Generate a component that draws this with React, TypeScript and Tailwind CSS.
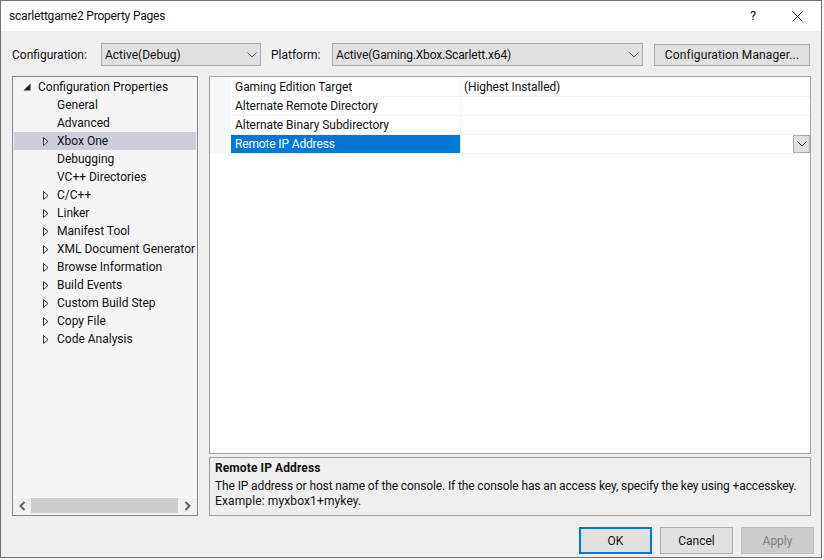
import React from 'react';

const treeItems = [
  { label: 'General', arrow: false },
  { label: 'Advanced', arrow: false },
  { label: 'Xbox One', arrow: true, selected: true },
  { label: 'Debugging', arrow: false },
  { label: 'VC++ Directories', arrow: false },
  { label: 'C/C++', arrow: true },
  { label: 'Linker', arrow: true },
  { label: 'Manifest Tool', arrow: true },
  { label: 'XML Document Generator', arrow: true },
  { label: 'Browse Information', arrow: true },
  { label: 'Build Events', arrow: true },
  { label: 'Custom Build Step', arrow: true },
  { label: 'Copy File', arrow: true },
  { label: 'Code Analysis', arrow: true },
];

const gridRows = [
  { name: 'Gaming Edition Target', value: '(Highest Installed)' },
  { name: 'Alternate Remote Directory', value: '' },
  { name: 'Alternate Binary Subdirectory', value: '' },
];

const Chevron = ({ color = '#5f5f5f' }: { color?: string }) => (
  <svg width="10" height="6" viewBox="0 0 10 6" fill="none">
    <path d="M0.5 0.5L5 5L9.5 0.5" stroke={color} strokeWidth="1" />
  </svg>
);

const ComboBox = ({ text, className }: { text: string; className: string }) => (
  <div className={`flex h-[23px] items-center justify-between border border-[#adadad] bg-[#e1e1e1] px-[3px] ${className}`}>
    <span>{text}</span>
    <span className="flex w-[10px] justify-center">
      <Chevron />
    </span>
  </div>
);

const DialogButton = ({ label, className }: { label: string; className: string }) => (
  <div className={`flex h-[27px] w-[73px] items-center justify-center ${className}`}>{label}</div>
);

export default function App() {
  return (
    <div className="h-[560px] w-[824px] bg-[#f7f7f7] text-[12px] leading-[18px] text-[#101010] [font-family:Roboto,sans-serif]">
      <div className="flex h-[558px] w-[822px] flex-col border border-[#707070] bg-[#efefef]">
        {/* Title bar */}
        <div className="flex h-[30px] shrink-0 items-center justify-between bg-white pl-[8px]">
          <span className="tracking-[-0.2px]">scarlettgame2 Property Pages</span>
          <div className="flex items-center">
            <span className="w-[46px] pl-[2px] text-center text-[13px]">?</span>
            <span className="flex w-[46px] justify-center pr-[2px]">
              <svg width="11" height="11" viewBox="0 0 11 11" fill="none">
                <path d="M0.5 0.5L10.5 10.5M10.5 0.5L0.5 10.5" stroke="#1a1a1a" strokeWidth="1" />
              </svg>
            </span>
          </div>
        </div>

        {/* Configuration row */}
        <div className="mt-[12px] flex h-[23px] shrink-0 items-center pl-[11px]">
          <span className="w-[89px]">Configuration:</span>
          <ComboBox text="Active(Debug)" className="w-[160px]" />
          <span className="ml-[10px] w-[61px]">Platform:</span>
          <ComboBox text="Active(Gaming.Xbox.Scarlett.x64)" className="w-[311px] tracking-[-0.15px]" />
          <div className="ml-[11px] flex h-[22px] w-[156px] items-center justify-center border border-[#adadad] bg-[#e1e1e1] tracking-[0.12px]">
            Configuration Manager...
          </div>
        </div>

        {/* Main area */}
        <div className="mt-[10px] flex h-[440px] shrink-0 gap-[11px] pl-[11px]">
          {/* Tree */}
          <div className="flex h-full w-[186px] shrink-0 flex-col border border-[#82828c] bg-[#f5f5f5]">
            <div className="flex-1 overflow-hidden pl-[1px] pr-[1px] pt-[1px]">
              <div className="flex h-[18px] items-center whitespace-nowrap">
                <span className="flex w-[24px] justify-end pr-[7px]">
                  <svg width="8" height="8" viewBox="0 0 8 8">
                    <path d="M7.5 0.5V7.5H0.5Z" fill="#222" />
                  </svg>
                </span>
                <span>Configuration Properties</span>
              </div>
              {treeItems.map((item) => (
                <div
                  key={item.label}
                  className={`flex h-[18px] items-center whitespace-nowrap ${item.selected ? 'bg-[#cccedb]' : ''}`}
                >
                  <span className="flex w-[43px] shrink-0 justify-end pr-[8px]">
                    {item.arrow && (
                      <svg width="6" height="9" viewBox="0 0 6 9">
                        <path d="M0.5 0.5L5 4.5L0.5 8.5Z" fill="#f5f5f5" stroke="#333" strokeWidth="1" />
                      </svg>
                    )}
                  </span>
                  <span>{item.label}</span>
                </div>
              ))}
            </div>
            <div className="mx-[1px] mb-[2px] flex h-[16px] shrink-0 items-center border-t border-white bg-[#f0f0f0]">
              <span className="flex w-[17px] justify-center">
                <svg width="7" height="10" viewBox="0 0 7 10" fill="none">
                  <path d="M5.5 1L1.5 5L5.5 9" stroke="#606060" strokeWidth="2" />
                </svg>
              </span>
              <div className="h-full w-[147px] bg-[#cdcdcd]" />
              <span className="flex w-[18px] justify-center">
                <svg width="7" height="10" viewBox="0 0 7 10" fill="none">
                  <path d="M1.5 1L5.5 5L1.5 9" stroke="#606060" strokeWidth="2" />
                </svg>
              </span>
            </div>
          </div>

          {/* Property grid and description */}
          <div className="flex w-[602px] shrink-0 flex-col gap-[3px]">
            <div className="h-[378px] shrink-0 border border-[#a0a0a0] bg-white pt-[1px]">
              {gridRows.map((row) => (
                <div key={row.name} className="flex h-[19px]">
                  <div className="w-[21px] shrink-0 bg-[#f5f9fc]" />
                  <div className="w-[229px] shrink-0 border-b border-[#f2f2f2] pl-[4px] leading-[18px] tracking-[-0.04px]">{row.name}</div>
                  <div className="flex-1 border-b border-l border-[#f2f2f2] pl-[3px] leading-[18px] tracking-[-0.1px]">{row.value}</div>
                </div>
              ))}
              <div className="flex h-[19px]">
                <div className="w-[21px] shrink-0 bg-[#f5f9fc]" />
                <div className="h-[18px] w-[229px] shrink-0 bg-[#0078d7] pl-[4px] tracking-[-0.15px] text-white">Remote IP Address</div>
                <div className="flex flex-1 justify-end border-b border-l border-[#f2f2f2]">
                  <span className="flex h-[18px] w-[17px] items-center justify-center border border-[#adadad] bg-[#e1e1e1]">
                    <Chevron color="#404040" />
                  </span>
                </div>
              </div>
            </div>
            <div className="h-[59px] shrink-0 border border-[#a0a0a0] px-[5px] leading-[15px]">
              <div className="mt-[3px] font-bold tracking-[0.1px]">Remote IP Address</div>
              <div className="mt-[3px] whitespace-nowrap tracking-[-0.12px]">
                The IP address or host name of the console. If the console has an access key, specify the key using +accesskey.
              </div>
              <div className="tracking-[0.12px]">Example: myxbox1+mykey.</div>
            </div>
          </div>
        </div>

        {/* Footer buttons */}
        <div className="mt-[11px] flex shrink-0 gap-[8px] pl-[578px]">
          <DialogButton label="OK" className="border-2 border-[#0078d7] bg-[#e1e1e1]" />
          <DialogButton label="Cancel" className="border border-[#adadad] bg-[#e1e1e1]" />
          <DialogButton label="Apply" className="border border-[#bfbfbf] bg-[#cccccc] text-[#7f7f7f]" />
        </div>
      </div>
    </div>
  );
}
